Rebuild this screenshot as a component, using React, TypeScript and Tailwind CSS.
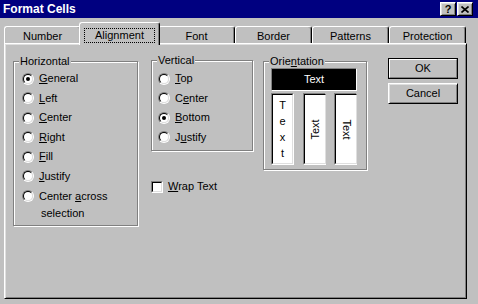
import React from 'react';

const raised =
  'border border-t-white border-l-white border-b-black border-r-black shadow-[inset_1px_1px_0_#dfdfdf,inset_-1px_-1px_0_#808080]';
const sunkenOuter = 'border border-t-[#808080] border-l-[#808080] border-b-white border-r-white';
const sunkenInner = 'border border-t-black border-l-black border-b-[#dfdfdf] border-r-[#dfdfdf]';

function Radio({ checked }: { checked?: boolean }) {
  return (
    <span className="flex w-[12px] h-[12px] shrink-0 rounded-full border border-t-[#808080] border-l-[#808080] border-b-white border-r-white">
      <span className="flex flex-1 items-center justify-center rounded-full border border-t-black border-l-black border-b-[#dfdfdf] border-r-[#dfdfdf] bg-white">
        {checked && <span className="w-[4px] h-[4px] rounded-full bg-black" />}
      </span>
    </span>
  );
}

function Group({ label, className, children }: { label: React.ReactNode; className: string; children: React.ReactNode }) {
  return (
    <div className={`relative border border-[#808080] shadow-[1px_1px_0_#fff,inset_1px_1px_0_#fff] ${className}`}>
      <span className="absolute left-[5px] -top-[8px] bg-[#c0c0c0] px-px leading-[14px]">{label}</span>
      {children}
    </div>
  );
}

function RadioRow({ checked, children }: { checked?: boolean; children: React.ReactNode }) {
  return (
    <div className="flex items-center gap-[5px] h-[19.5px]">
      <Radio checked={checked} />
      <span className="leading-[13px]">{children}</span>
    </div>
  );
}

const tabs = ['Number', 'Alignment', 'Font', 'Border', 'Patterns', 'Protection'];

export default function App() {
  return (
    <div className="w-[478px] h-[304px] bg-[#c0c0c0] overflow-hidden text-black text-[11px] font-['Liberation_Sans',Arial,sans-serif]">
      {/* title bar */}
      <div className="flex items-center h-[18px] bg-[#000080] pl-[3px] pr-[5px]">
        <span className="flex-1 text-white font-bold text-[12px] leading-[14px]">Format Cells</span>
        <div className="flex gap-px">
          <div className={`w-[16px] h-[14px] flex items-center justify-center bg-[#c0c0c0] text-black font-bold text-[11px] leading-[11px] ${raised}`}>?</div>
          <div className={`w-[16px] h-[14px] flex items-center justify-center bg-[#c0c0c0] ${raised}`}>
            <svg width="8" height="7" viewBox="0 0 8 7">
              <path d="M0.5 0.5 L7.5 6.5 M7.5 0.5 L0.5 6.5" stroke="#000" strokeWidth="1.6" />
            </svg>
          </div>
        </div>
      </div>

      {/* tabs */}
      <div className="flex items-end h-[21px] mt-[4px] pl-[4px]">
        {tabs.map(t =>
          t === 'Alignment' ? (
            <div
              key={t}
              className="relative z-10 -mx-[2px] w-[81px] h-[23px] -mb-[2px] flex justify-center items-start pt-[5px] bg-[#c0c0c0] rounded-t-[3px] border-t border-l border-r border-t-white border-l-white border-r-black shadow-[inset_-1px_0_0_#808080]"
            >
              <span className="h-[15px] px-[10px] flex items-center border border-dotted border-black leading-[13px]">{t}</span>
            </div>
          ) : (
            <div
              key={t}
              className="w-[77px] h-[17px] flex items-center justify-center pt-[2px] rounded-t-[3px] border-t border-l border-r border-t-white border-l-white border-r-black shadow-[inset_-1px_0_0_#808080]"
            >
              {t}
            </div>
          )
        )}
      </div>

      {/* panel */}
      <div className={`ml-[4px] w-[463px] h-[256px] flex items-start pl-[8px] pt-[14px] ${raised}`}>
        <Group label="Horizontal" className="mt-[3px] w-[125px] h-[165px] pl-[8px] pt-[7px]">
          <RadioRow checked><u>G</u>eneral</RadioRow>
          <RadioRow><u>L</u>eft</RadioRow>
          <RadioRow><u>C</u>enter</RadioRow>
          <RadioRow><u>R</u>ight</RadioRow>
          <RadioRow><u>F</u>ill</RadioRow>
          <RadioRow><u>J</u>ustify</RadioRow>
          <div className="flex items-start gap-[5px] mt-[1.5px]">
            <span className="mt-[2.5px]"><Radio /></span>
            <span className="leading-[17px]">
              Center <u>a</u>cross
              <br />
              <span className="pl-[2px]">selection</span>
            </span>
          </div>
        </Group>

        <div className="ml-[13px] w-[102px] flex flex-col">
          <Group label="Vertical" className="mt-[2px] h-[91px] pl-[6px] pt-[8px]">
            <RadioRow><u>T</u>op</RadioRow>
            <RadioRow>C<u>e</u>nter</RadioRow>
            <RadioRow checked><u>B</u>ottom</RadioRow>
            <RadioRow>J<u>u</u>stify</RadioRow>
          </Group>
          <div className="flex items-center gap-[5px] mt-[29px]">
            <span className={`flex w-[12px] h-[12px] ${sunkenOuter}`}>
              <span className={`flex-1 bg-white ${sunkenInner}`} />
            </span>
            <span className="leading-[13px]"><u>W</u>rap Text</span>
          </div>
        </div>

        <Group label={<>Orie<u>n</u>tation</>} className="ml-[10px] mt-[3px] w-[104px] h-[109px] pl-[7px] pt-[6px]">
          <div className={`w-[86px] h-[23px] bg-black text-white flex items-center justify-center ${sunkenOuter}`}>
            Text
          </div>
          <div className="w-[86px] mt-[2px] flex justify-between">
            <div className={`w-[23px] h-[72px] flex ${sunkenOuter}`}>
              <div className={`flex-1 bg-white flex flex-col items-center justify-center leading-[16px] ${sunkenInner}`}>
                <span>T</span>
                <span>e</span>
                <span>x</span>
                <span>t</span>
              </div>
            </div>
            <div className={`w-[23px] h-[72px] flex ${sunkenOuter}`}>
              <div className={`flex-1 bg-white flex items-center justify-center ${sunkenInner}`}>
                <span className="inline-block -rotate-90 leading-[13px]">Text</span>
              </div>
            </div>
            <div className={`w-[23px] h-[72px] flex ${sunkenOuter}`}>
              <div className={`flex-1 bg-white flex items-center justify-center ${sunkenInner}`}>
                <span className="inline-block rotate-90 leading-[13px]">Text</span>
              </div>
            </div>
          </div>
        </Group>

        <div className="ml-[21px] w-[70px] flex flex-col gap-[4px]">
          <div className="h-[21px] flex border border-black">
            <div className="flex-1 flex items-center justify-center border border-t-white border-l-white border-b-[#808080] border-r-[#808080]">
              OK
            </div>
          </div>
          <div className={`h-[21px] flex items-center justify-center ${raised}`}>Cancel</div>
        </div>
      </div>
    </div>
  );
}
